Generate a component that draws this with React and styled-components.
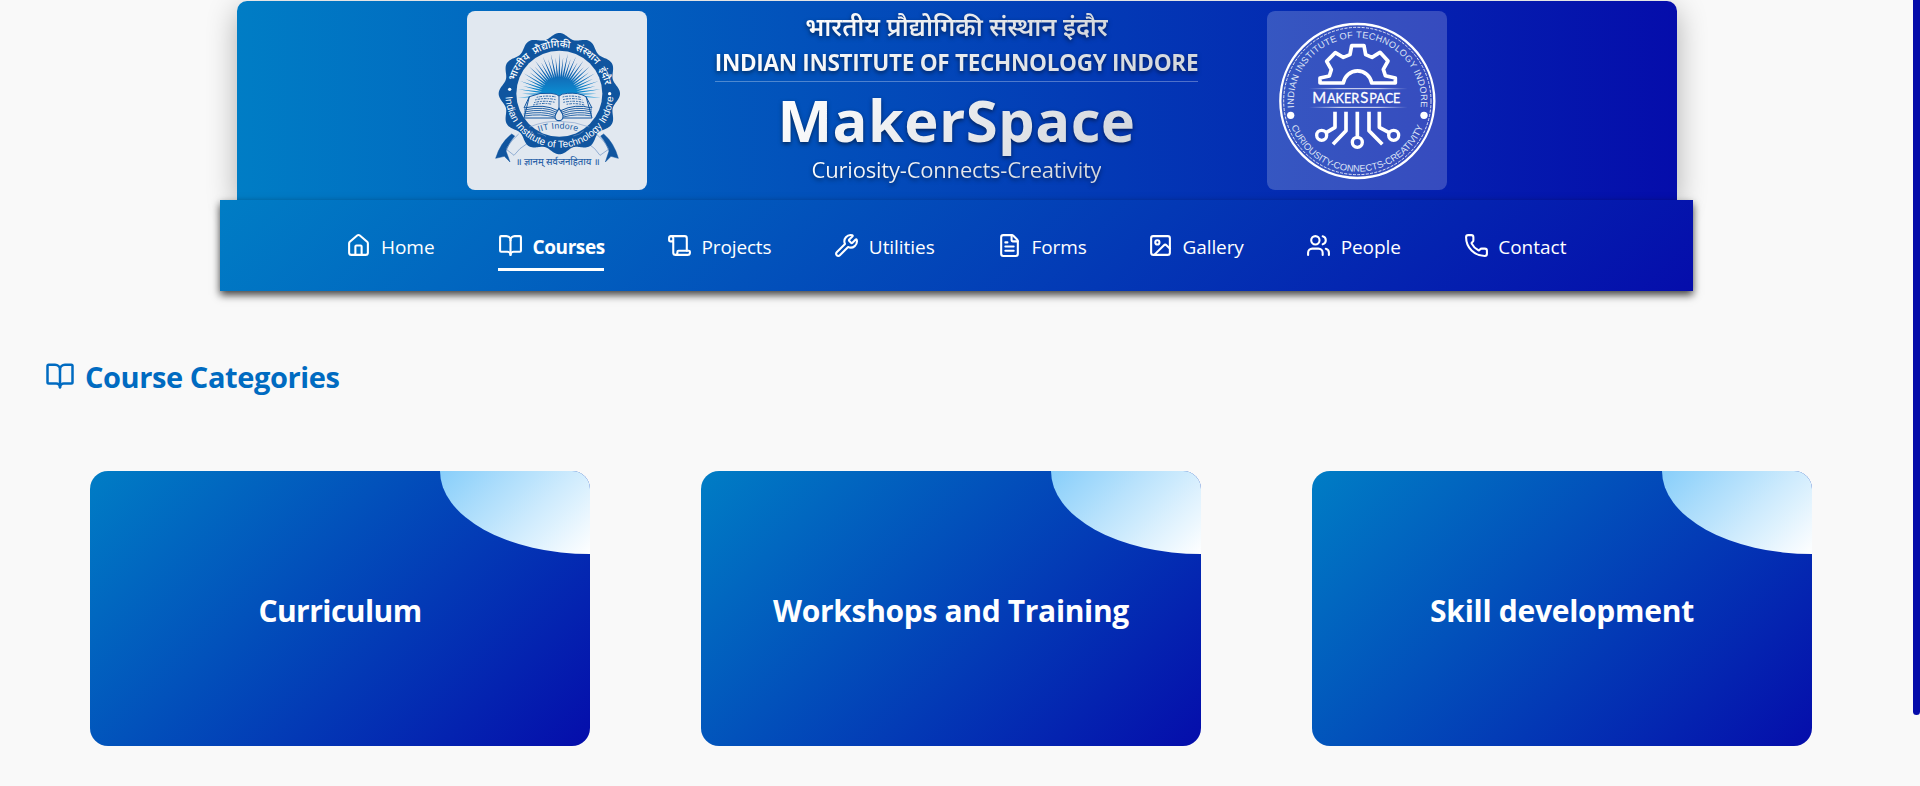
import React from "react";
import styled, { createGlobalStyle } from "styled-components";
import { House, BookOpen, Scroll, Wrench, FileText, Image, Users, Phone } from "lucide-react";

const GlobalStyle = createGlobalStyle`
  *, *::before, *::after { box-sizing: border-box; }
  html, body { margin: 0; padding: 0; background: #f9f9f9; }
  body {
    height: 786px;
    overflow: hidden;
    font-family: "Segoe UI", "Open Sans", "Noto Sans", "Noto Sans Devanagari", sans-serif;
  }
`;

const Page = styled.div`
  position: relative;
  height: 786px;
  padding-right: 7px;
  overflow: hidden;
`;

const ScrollThumb = styled.div`
  position: absolute;
  top: 0;
  right: 0;
  width: 7px;
  height: 715px;
  border-radius: 0 0 4px 4px;
  background: #050caa;
`;

const Header = styled.header`
  display: flex;
  justify-content: center;
  width: 1440px;
  height: 199px;
  margin: 1px auto 0;
  padding-top: 10px;
  border-radius: 10px 10px 0 0;
  background: linear-gradient(90deg, #007dc5, #050dab);
  box-shadow: 0 8px 30px rgba(0, 0, 0, 0.3);
`;

const LogoCard = styled.div`
  width: 180px;
  height: 179px;
  border-radius: 8px;
  overflow: hidden;
  background: ${(p) => (p.$solid ? "#e1e8f0" : "rgba(255, 255, 255, 0.2)")};
  svg { display: block; }
`;

const Titles = styled.div`
  display: flex;
  flex-direction: column;
  align-items: center;
  width: 620px;
`;

const Title = styled.div`
  height: ${(p) => p.$height}px;
  margin: ${(p) => p.$lift || 0}px 0 0;
  line-height: ${(p) => p.$height}px;
  font-size: ${(p) => p.$size}px;
  font-weight: ${(p) => p.$weight};
  letter-spacing: ${(p) => p.$tracking}px;
  white-space: nowrap;
  color: transparent;
  background: linear-gradient(135deg, #ffffff, #d1d5db);
  background-clip: text;
  -webkit-background-clip: text;
  filter: drop-shadow(0 2px 2px rgba(0, 0, 0, 0.5));
`;

const Rule = styled.div`
  width: 483px;
  height: 1px;
  background: rgba(255, 255, 255, 0.3);
`;

const Nav = styled.nav`
  position: relative;
  display: flex;
  justify-content: center;
  gap: 62.5px;
  width: 1473px;
  height: 91px;
  margin: 0 auto;
  padding-top: 29px;
  background: linear-gradient(135deg, #007dc5, #050dab);
  box-shadow: 0 4px 8px rgba(0, 0, 0, 0.75);
`;

const NavLink = styled.a`
  display: flex;
  gap: 9.6px;
  height: 42px;
  padding-top: 3px;
  color: #fff;
  border-bottom: 3px solid ${(p) => (p.$active ? "#fff" : "transparent")};
  svg { flex: none; margin-top: 0.6px; }
`;

const NavLabel = styled.span`
  width: ${(p) => p.$width}px;
  height: 30px;
  line-height: 30px;
  font-size: 19px;
  font-weight: ${(p) => (p.$active ? 700 : 500)};
  letter-spacing: ${(p) => p.$tracking}px;
  white-space: nowrap;
`;

const SectionHeading = styled.h2`
  display: flex;
  gap: 10px;
  margin: 68px 0 0 45px;
  height: 36px;
  font-size: 29px;
  line-height: 36px;
  font-weight: 700;
  letter-spacing: ${(p) => p.$tracking}px;
  color: #006bc1;
  svg { flex: none; margin-top: 2px; }
`;

const Cards = styled.div`
  display: flex;
  gap: 111px;
  margin: 76px 0 0 90px;
`;

const Card = styled.article`
  position: relative;
  display: flex;
  align-items: center;
  justify-content: center;
  width: 500px;
  height: 275px;
  padding-top: 4px;
  border-radius: 18px;
  overflow: hidden;
  background: linear-gradient(135deg, #007dc5, #050dab);
  &::before {
    content: "";
    position: absolute;
    top: 0;
    right: 0;
    width: 30%;
    height: 83px;
    border-radius: 0 0 0 100%;
    background: linear-gradient(135deg, #87cefa, #ffffff);
  }
`;

const CardTitle = styled.h3`
  margin: 0;
  font-size: 30px;
  line-height: 40px;
  font-weight: 700;
  letter-spacing: ${(p) => p.$tracking}px;
  white-space: nowrap;
  color: #fff;
`;

const polar = (cx, cy, r, a) => `${(cx + r * Math.sin(a)).toFixed(1)},${(cy - r * Math.cos(a)).toFixed(1)}`;

const scallop = Array.from({ length: 360 }, (_, i) => {
  const a = (i * Math.PI) / 180;
  return polar(298, 281, 174 + 8 * Math.cos(12 * a), a);
}).join(" ");

const rays = Array.from({ length: 33 }, (_, i) => {
  const a = ((i - 16) * 5.9 * Math.PI) / 180;
  const tip = i % 2 ? 112 : 125;
  return `M${polar(298, 284, 48, a - 0.06)}L${polar(298, 284, tip, a)}L${polar(298, 284, 48, a + 0.06)}Z`;
}).join("");

function InstituteLogo() {
  return (
    <svg width="180" height="179" viewBox="21 33 540 537">
      <defs>
        <linearGradient id="sun" x1="0" y1="157" x2="0" y2="292" gradientUnits="userSpaceOnUse">
          <stop offset="0" stopColor="#0b4f9e" />
          <stop offset="0.5" stopColor="#1268b4" />
          <stop offset="1" stopColor="#0a94d8" />
        </linearGradient>
        <path id="ringTop" d="M159,281 A139,139 0 0 1 437,281" />
        <path id="ringBottom" d="M136,281 A162,162 0 0 0 460,281" />
        <path id="ribbonText" d="M236,396 Q298,375 358,396" />
      </defs>
      <g fill="#10559f" stroke="#10559f" strokeWidth="1.5">
        <path d="M155,402 L164,408 Q145,430 138,453 L150,486 L133,469 L107,475 Q121,428 155,402Z" />
        <path d="M431,402 L422,408 Q440,430 447,453 L436,486 L453,469 L475,475 Q462,428 431,402Z" />
      </g>
      <g fill="none" stroke="#5c86bd" strokeWidth="1.8">
        <path d="M176,402 Q154,420 138,447 L162,466 Q178,444 201,431" />
        <path d="M409,402 Q432,420 447,447 L420,466 Q406,444 385,431" />
      </g>
      <polygon points={scallop} fill="#10559f" />
      <circle cx="298" cy="281" r="129" fill="#e1e7ef" />
      <path d={rays} fill="url(#sun)" />
      <path d="M243,292 A55,60 0 0 1 353,292Z" fill="url(#sun)" />
      <path d="M208,290 Q240,276 273,280 Q292,282 297,288 Q304,281 323,280 Q355,277 378,290 L396,354 L306,354 L297,360 L288,354 L192,354Z" fill="#e1e7ef" stroke="#10559f" strokeWidth="3" />
      <g fill="none" stroke="#10559f">
        <path d="M297,288 V330 M208,290 L192,324 Q255,310 293,332 M378,290 L396,324 Q345,310 302,332" strokeWidth="3" />
        <path d="M192,330 Q255,317 290,337 M192,336 Q250,324 287,341 M191,342 Q250,332 284,346 M192,348 Q245,340 284,351 M396,330 Q345,317 304,337 M396,336 Q350,324 307,341 M396,342 Q350,332 310,346 M396,348 Q350,340 310,351" strokeWidth="2.6" />
        <path d="M230,292 Q260,285 288,291 M225,300 Q255,292 287,299 M222,308 Q250,300 285,307 M219,315 Q250,307 276,313 M308,291 Q335,285 362,292 M309,299 Q340,292 367,300 M310,307 Q345,300 371,308 M320,313 Q345,308 373,315" strokeWidth="2.6" strokeDasharray="5 3 8 3" />
        <path d="M208,381 Q255,362 298,364 Q345,364 388,381 M232,399 Q255,405 258,410 M340,408 Q360,404 371,393" stroke="#7b9ac6" strokeWidth="1.8" />
      </g>
      <path d="M297,325 C308,340 310,345 309,350 A12,12 0 0 1 285,350 C285,344 288,339 297,325Z" fill="#e1e7ef" stroke="#10559f" strokeWidth="3.5" />
      <text fill="#205ea5" fontSize="26" fontFamily="Liberation Sans, sans-serif" letterSpacing="0.8">
        <textPath href="#ribbonText">IIT Indore</textPath>
      </text>
      <g fill="#fff">
        <circle cx="149" cy="268" r="5" />
        <circle cx="449" cy="281" r="5" />
        <text fontSize="30" fontWeight="500" textAnchor="middle" fontFamily="Noto Sans Devanagari, Noto Sans, sans-serif">
          <textPath href="#ringTop" startOffset="51.5%">भारतीय&#160; प्रौद्योगिकी&#160; संस्थान&#160; इंदौर</textPath>
        </text>
        <text fontSize="30" letterSpacing="0.2" textAnchor="middle" fontFamily="Liberation Sans, sans-serif">
          <textPath href="#ringBottom" startOffset="50%">Indian Institute of Technology Indore</textPath>
        </text>
      </g>
      <text x="293" y="495" fill="#2a62a8" fontSize="28" fontWeight="500" textAnchor="middle" fontFamily="Noto Sans Devanagari, Noto Sans, sans-serif">
        ॥ ज्ञानम् सर्वजनहिताय ॥
      </text>
    </svg>
  );
}

function MakerLogo() {
  return (
    <svg width="180" height="179" viewBox="21 33 540 537">
      <defs>
        <linearGradient id="fade" x1="147" x2="443" y1="0" y2="0" gradientUnits="userSpaceOnUse">
          <stop offset="0" stopColor="#fff" stopOpacity="0" />
          <stop offset="0.3" stopColor="#fff" stopOpacity="0.85" />
          <stop offset="0.7" stopColor="#fff" stopOpacity="0.85" />
          <stop offset="1" stopColor="#fff" stopOpacity="0" />
        </linearGradient>
        <path id="sealTop" d="M106,348 A191,191 0 1 1 478,348" />
        <path id="sealBottom" d="M80,303 A212,212 0 0 0 504,303" />
      </defs>
      <g fill="none" stroke="#fff">
        <circle cx="292" cy="303" r="231" strokeWidth="7" />
        <circle cx="292" cy="303" r="221" strokeWidth="2.5" strokeDasharray="9 4" />
        <path d="M180,249 V234 L208,228 L214,209 L200,184 L226,158 L250,172 L270,164 L275,137 H312 L317,164 L336,172 L360,157 L384,183 L370,208 L376,227 L406,234 V249 H335 A43,43 0 0 0 250,249 Z" strokeWidth="11" strokeLinejoin="round" />
        <path d="M225,335 V382 L200,397 M258,335 V392 L219,433 M292,335 V410 M327,335 V392 L367,433 M358,335 V382 L386,397" strokeWidth="11" strokeLinejoin="round" />
        <circle cx="185" cy="406" r="15" strokeWidth="10" />
        <circle cx="292" cy="427" r="15" strokeWidth="10" />
        <circle cx="401" cy="406" r="15" strokeWidth="10" />
      </g>
      <g fill="url(#fade)">
        <rect x="147" y="264.5" width="296" height="3" />
        <rect x="147" y="320.5" width="296" height="3" />
      </g>
      <g fill="#fff" stroke="#fff" strokeWidth="0.9">
        <text y="308" fontFamily="Lato, sans-serif" fontWeight="400" fontSize="38">
          <tspan x="157" fontSize="45">M</tspan>
          <tspan x="201">AKER</tspan>
          <tspan x="301" fontSize="45">S</tspan>
          <tspan x="328">PACE</tspan>
        </text>
      </g>
      <g fill="#fff">
        <circle cx="92" cy="346" r="11" />
        <circle cx="492" cy="346" r="11" />
      </g>
      <g fill="#dfe5f6" fontFamily="Liberation Sans, sans-serif" textAnchor="middle">
        <text fontSize="27.5" letterSpacing="0.9">
          <textPath href="#sealTop" startOffset="50%">INDIAN INSTITUTE OF TECHNOLOGY INDORE</textPath>
        </text>
        <text fontSize="28">
          <textPath href="#sealBottom" startOffset="50%">CURIOUSITY-CONNECTS-CREATIVITY</textPath>
        </text>
      </g>
    </svg>
  );
}

const links = [
  { label: "Home", icon: House, width: 54.5, tracking: 0 },
  { label: "Courses", icon: BookOpen, width: 72, tracking: -0.4, active: true },
  { label: "Projects", icon: Scroll, width: 70.2, tracking: -0.15 },
  { label: "Utilities", icon: Wrench, width: 65.5, tracking: -0.05 },
  { label: "Forms", icon: FileText, width: 54, tracking: -0.1 },
  { label: "Gallery", icon: Image, width: 61, tracking: -0.1 },
  { label: "People", icon: Users, width: 60.5, tracking: -0.05 },
  { label: "Contact", icon: Phone, width: 68.5, tracking: 0 },
];

const categories = [
  { title: "Curriculum", tracking: -0.55 },
  { title: "Workshops and Training", tracking: -0.33 },
  { title: "Skill development", tracking: -0.28 },
];

export default function App() {
  return (
    <Page>
      <GlobalStyle />
      <Header>
        <LogoCard $solid><InstituteLogo /></LogoCard>
        <Titles>
          <Title $height={38} $lift={-4} $size={25.3} $weight={600} $tracking={0}>भारतीय प्रौद्योगिकी संस्थान इंदौर</Title>
          <Title $height={36} $lift={0} $size={22.6} $weight={700} $tracking={-0.33}>INDIAN INSTITUTE OF TECHNOLOGY INDORE</Title>
          <Rule />
          <Title as="h1" $height={82} $lift={-3} $size={58} $weight={700} $tracking={0.4}>MakerSpace</Title>
          <Title $height={32} $lift={-8} $size={22} $weight={400} $tracking={-0.2}>Curiosity-Connects-Creativity</Title>
        </Titles>
        <LogoCard><MakerLogo /></LogoCard>
      </Header>
      <Nav>
        {links.map(({ label, icon: Icon, width, tracking, active }) => (
          <NavLink key={label} $active={active}>
            <Icon size={25} />
            <NavLabel $width={width} $tracking={tracking} $active={active}>{label}</NavLabel>
          </NavLink>
        ))}
      </Nav>
      <SectionHeading $tracking={-0.41}>
        <BookOpen size={30} />
        Course Categories
      </SectionHeading>
      <Cards>
        {categories.map((c) => (
          <Card key={c.title}><CardTitle $tracking={c.tracking}>{c.title}</CardTitle></Card>
        ))}
      </Cards>
      <ScrollThumb />
    </Page>
  );
}
